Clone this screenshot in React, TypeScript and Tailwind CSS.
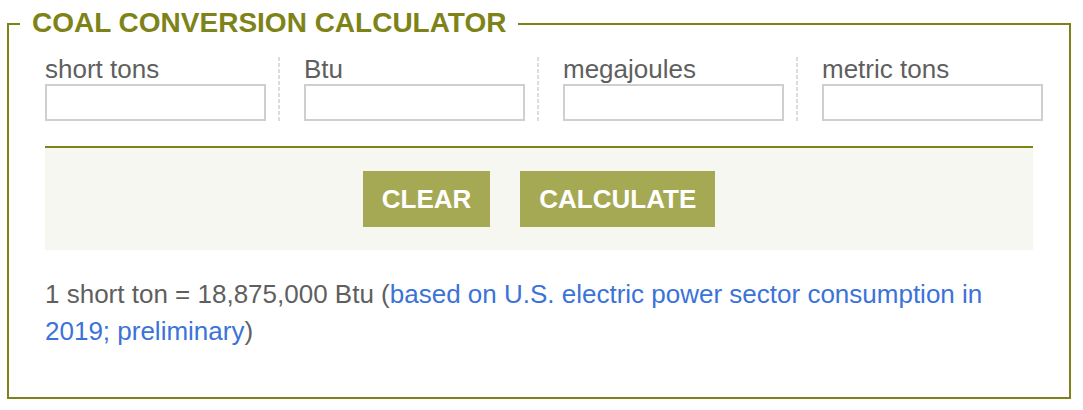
import React from "react";

const font = { fontFamily: '"Liberation Sans", Arial, Helvetica, sans-serif' };

function Field({ label }: { label: string }) {
  return (
    <div className="flex w-[221px] flex-col">
      <label className="text-[26px] leading-[24px] text-[#5f5f5f]">{label}</label>
      <input
        type="text"
        className="mt-[3px] h-[37px] w-full border-2 border-[#cfcfcf] bg-white outline-none"
      />
    </div>
  );
}

function Sep() {
  return (
    <div className="ml-[12px] mr-[24px] w-[2px] self-stretch bg-[repeating-linear-gradient(to_bottom,#dcdcdc_0px,#dcdcdc_4px,transparent_4px,transparent_6px)]" />
  );
}

export default function App() {
  return (
    <div className="h-[410px] w-[1083px] bg-white" style={font}>
      <fieldset className="ml-[7px] mt-[8px] h-[391px] w-[1064px] border-2 border-[#7e8318] pl-[11px] pt-[17px]">
        <legend className="px-[12px] pb-[2px] text-[28px] font-bold leading-[30px] text-[#7e8318]">
          COAL CONVERSION CALCULATOR
        </legend>
        <div className="pl-[25px]">
          <div className="flex">
            <Field label="short tons" />
            <Sep />
            <Field label="Btu" />
            <Sep />
            <Field label="megajoules" />
            <Sep />
            <Field label="metric tons" />
          </div>
          <div className="mt-[25px] flex w-[988px] justify-center gap-[30px] border-t-2 border-[#7e8318] bg-[#f7f7f2] pb-[23px] pt-[23px]">
            <button className="h-[56px] bg-[#a6a954] px-[19px] text-[26px] font-bold text-white">
              CLEAR
            </button>
            <button className="h-[56px] bg-[#a6a954] px-[19px] text-[26px] font-bold text-white">
              CALCULATE
            </button>
          </div>
          <p className="mt-[26px] w-[988px] text-[26px] leading-[37px] text-[#5f5f5f]">
            1 short ton = 18,875,000 Btu (
            <a href="#" className="text-[#3b73d9]">
              based on U.S. electric power sector consumption in 2019; preliminary
            </a>
            )
          </p>
        </div>
      </fieldset>
    </div>
  );
}
